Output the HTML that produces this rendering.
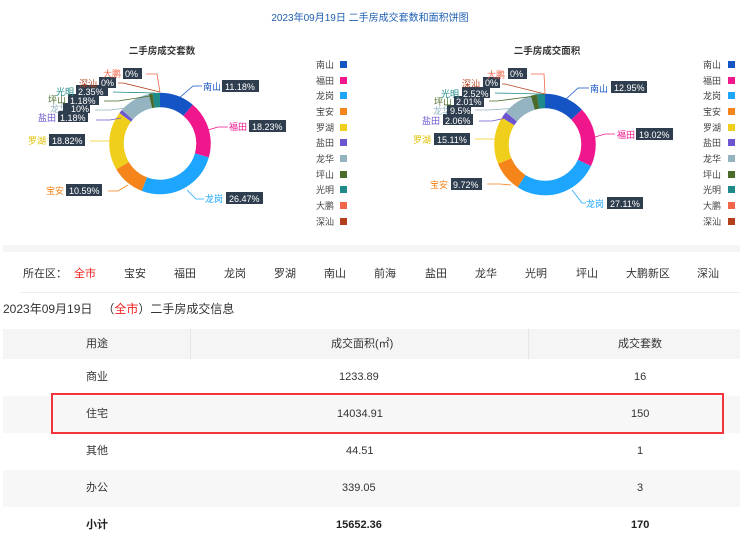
<!DOCTYPE html>
<html><head><meta charset="utf-8"><style>
body{margin:0;width:740px;height:549px;overflow:hidden;background:#fff;font-family:"Liberation Sans","Noto Sans CJK SC",sans-serif;color:#333;position:relative}
.a{position:absolute;white-space:nowrap}
.f{font-size:11px;color:#333;top:265px}
.row{position:absolute;left:3px;width:737px;height:37px;font-size:11px;color:#333}
.row span{position:absolute;top:0;line-height:37px}
</style></head><body>
<div class="a" style="left:0;width:740px;top:9px;text-align:center;font-size:10px;color:#1e5fb3">2023年09月19日 二手房成交套数和面积饼图</div>
<svg class="a" style="left:0;top:0" width="740" height="245" font-size="9" font-family="Liberation Sans,Noto Sans CJK SC,sans-serif">
<text x="162" y="54" text-anchor="middle" font-size="9.5" fill="#333" font-weight="bold">二手房成交套数</text>
<text x="547" y="54" text-anchor="middle" font-size="9.5" fill="#333" font-weight="bold">二手房成交面积</text>
<g id="c1" transform="translate(160,143.5) rotate(-90)" fill="none" stroke-width="14.5">
<circle r="43.5" pathLength="100" stroke="#1554c4" stroke-dasharray="11.18 100" stroke-dashoffset="0"/>
<circle r="43.5" pathLength="100" stroke="#f0178d" stroke-dasharray="18.23 100" stroke-dashoffset="-11.18"/>
<circle r="43.5" pathLength="100" stroke="#1ea6ff" stroke-dasharray="26.47 100" stroke-dashoffset="-29.41"/>
<circle r="43.5" pathLength="100" stroke="#f5841a" stroke-dasharray="10.59 100" stroke-dashoffset="-55.88"/>
<circle r="43.5" pathLength="100" stroke="#f0cf1c" stroke-dasharray="18.82 100" stroke-dashoffset="-66.47"/>
<circle r="43.5" pathLength="100" stroke="#6d55cf" stroke-dasharray="1.18 100" stroke-dashoffset="-85.29"/>
<circle r="43.5" pathLength="100" stroke="#94b4c1" stroke-dasharray="10 100" stroke-dashoffset="-86.47"/>
<circle r="43.5" pathLength="100" stroke="#4a6b2a" stroke-dasharray="1.18 100" stroke-dashoffset="-96.47"/>
<circle r="43.5" pathLength="100" stroke="#1f8a8a" stroke-dasharray="2.35 100" stroke-dashoffset="-97.65"/>
</g>
<g transform="translate(545,144.5) rotate(-90)" fill="none" stroke-width="14.5">
<circle r="43.5" pathLength="100" stroke="#1554c4" stroke-dasharray="12.95 100" stroke-dashoffset="0"/>
<circle r="43.5" pathLength="100" stroke="#f0178d" stroke-dasharray="19.02 100" stroke-dashoffset="-12.95"/>
<circle r="43.5" pathLength="100" stroke="#1ea6ff" stroke-dasharray="27.11 100" stroke-dashoffset="-31.97"/>
<circle r="43.5" pathLength="100" stroke="#f5841a" stroke-dasharray="9.72 100" stroke-dashoffset="-59.08"/>
<circle r="43.5" pathLength="100" stroke="#f0cf1c" stroke-dasharray="15.11 100" stroke-dashoffset="-68.8"/>
<circle r="43.5" pathLength="100" stroke="#6d55cf" stroke-dasharray="2.06 100" stroke-dashoffset="-83.91"/>
<circle r="43.5" pathLength="100" stroke="#94b4c1" stroke-dasharray="9.5 100" stroke-dashoffset="-85.97"/>
<circle r="43.5" pathLength="100" stroke="#4a6b2a" stroke-dasharray="2.01 100" stroke-dashoffset="-95.47"/>
<circle r="43.5" pathLength="100" stroke="#1f8a8a" stroke-dasharray="2.52 100" stroke-dashoffset="-97.48"/>
</g>
<g fill="none" stroke-width="0.8">
<path d="M178 99 L193 86 H202" stroke="#1554c4"/><path d="M208 130 L218 127 H228" stroke="#f0178d"/>
<path d="M187 190 L196 199 H204" stroke="#1ea6ff"/><path d="M128 185 L118 191 H108" stroke="#f5841a"/>
<path d="M110 141 H90" stroke="#f0cf1c"/><path d="M121 118 L110 120 H96" stroke="#6d55cf"/>
<path d="M135 107 L110 110 H95" stroke="#94b4c1"/><path d="M150 96 L118 101 H104" stroke="#4a6b2a"/>
<path d="M155 93 L113 92" stroke="#1f8a8a"/><path d="M160 92 L123 83 H118" stroke="#b3401b"/>
<path d="M160 92 L157 74 H146" stroke="#f06548"/>
<path d="M565 100 L578 88 H589" stroke="#1554c4"/><path d="M595 137 L605 134 H615" stroke="#f0178d"/>
<path d="M572 190 L582 203 H586" stroke="#1ea6ff"/><path d="M511 185 L500 184 H487" stroke="#f5841a"/>
<path d="M495 139 H475" stroke="#f0cf1c"/><path d="M506 118 L492 121 H479" stroke="#6d55cf"/>
<path d="M520 108 L488 110 H475" stroke="#94b4c1"/><path d="M535 96 L497 101 H489" stroke="#4a6b2a"/>
<path d="M541 94 L495 93" stroke="#1f8a8a"/><path d="M545 94 L505 84 H502" stroke="#b3401b"/>
<path d="M545 94 L544 74 H531" stroke="#f06548"/>
</g>
<g id="lbl">
<!-- chart1 -->
<text x="203" y="90" fill="#1554c4">南山</text><rect x="222" y="80" width="37" height="12" fill="#2f3e4e"/><text x="225" y="90" fill="#fff">11.18%</text>
<text x="229" y="130" fill="#f0178d">福田</text><rect x="249" y="120" width="37" height="12" fill="#2f3e4e"/><text x="252" y="130" fill="#fff">18.23%</text>
<text x="205" y="202" fill="#1ea6ff">龙岗</text><rect x="226" y="192" width="37" height="12" fill="#2f3e4e"/><text x="229" y="202" fill="#fff">26.47%</text>
<text x="46" y="194" fill="#f5841a">宝安</text><rect x="66" y="184" width="36" height="12" fill="#2f3e4e"/><text x="69" y="194" fill="#fff">10.59%</text>
<text x="28" y="144" fill="#e0c000">罗湖</text><rect x="49" y="134" width="36" height="12" fill="#2f3e4e"/><text x="52" y="144" fill="#fff">18.82%</text>
<text x="38" y="121" fill="#6d55cf">盐田</text><rect x="58" y="111" width="30" height="11" fill="#2f3e4e"/><text x="60" y="121" fill="#fff">1.18%</text>
<text x="50" y="112" fill="#94b4c1">龙华</text><rect x="63" y="103" width="27" height="10" fill="#2f3e4e"/><text x="71" y="112" fill="#fff">10%</text>
<text x="48" y="103" fill="#4a6b2a">坪山</text><rect x="68" y="94" width="31" height="11" fill="#2f3e4e"/><text x="70" y="104" fill="#fff">1.18%</text>
<text x="56" y="95" fill="#1f8a8a">光明</text><rect x="76" y="85" width="32" height="11" fill="#2f3e4e"/><text x="78" y="95" fill="#fff">2.35%</text>
<text x="79" y="87" fill="#b3401b">深汕</text><rect x="99" y="77" width="17" height="11" fill="#2f3e4e"/><text x="101" y="86" fill="#fff">0%</text>
<text x="103" y="77" fill="#f06548">大鹏</text><rect x="123" y="68" width="19" height="11" fill="#2f3e4e"/><text x="125" y="77" fill="#fff">0%</text>
<!-- chart2 -->
<text x="590" y="92" fill="#1554c4">南山</text><rect x="611" y="81" width="36" height="12" fill="#2f3e4e"/><text x="614" y="91" fill="#fff">12.95%</text>
<text x="617" y="138" fill="#f0178d">福田</text><rect x="636" y="128" width="37" height="12" fill="#2f3e4e"/><text x="639" y="138" fill="#fff">19.02%</text>
<text x="586" y="207" fill="#1ea6ff">龙岗</text><rect x="607" y="197" width="36" height="12" fill="#2f3e4e"/><text x="610" y="207" fill="#fff">27.11%</text>
<text x="430" y="188" fill="#f5841a">宝安</text><rect x="451" y="178" width="31" height="12" fill="#2f3e4e"/><text x="453" y="188" fill="#fff">9.72%</text>
<text x="413" y="143" fill="#e0c000">罗湖</text><rect x="434" y="133" width="36" height="12" fill="#2f3e4e"/><text x="437" y="143" fill="#fff">15.11%</text>
<text x="422" y="124" fill="#6d55cf">盐田</text><rect x="443" y="114" width="30" height="11" fill="#2f3e4e"/><text x="445" y="124" fill="#fff">2.06%</text>
<text x="433" y="114" fill="#94b4c1">龙华</text><rect x="447" y="105" width="24" height="10" fill="#2f3e4e"/><text x="450" y="114" fill="#fff">9.5%</text>
<text x="434" y="105" fill="#4a6b2a">坪山</text><rect x="454" y="96" width="30" height="11" fill="#2f3e4e"/><text x="456" y="105" fill="#fff">2.01%</text>
<text x="441" y="97" fill="#1f8a8a">光明</text><rect x="462" y="87" width="28" height="11" fill="#2f3e4e"/><text x="463" y="97" fill="#fff">2.52%</text>
<text x="462" y="87" fill="#b3401b">深汕</text><rect x="483" y="77" width="17" height="11" fill="#2f3e4e"/><text x="485" y="86" fill="#fff">0%</text>
<text x="487" y="78" fill="#f06548">大鹏</text><rect x="508" y="68" width="19" height="11" fill="#2f3e4e"/><text x="510" y="77" fill="#fff">0%</text>
</g>
<g fill="#444" font-size="9">
<text x="316" y="68">南山</text><text x="316" y="84">福田</text><text x="316" y="99">龙岗</text><text x="316" y="115">宝安</text><text x="316" y="131">罗湖</text><text x="316" y="146">盐田</text><text x="316" y="162">龙华</text><text x="316" y="178">坪山</text><text x="316" y="193">光明</text><text x="316" y="209">大鹏</text><text x="316" y="225">深汕</text>
<text x="703" y="68">南山</text><text x="703" y="84">福田</text><text x="703" y="99">龙岗</text><text x="703" y="115">宝安</text><text x="703" y="131">罗湖</text><text x="703" y="146">盐田</text><text x="703" y="162">龙华</text><text x="703" y="178">坪山</text><text x="703" y="193">光明</text><text x="703" y="209">大鹏</text><text x="703" y="225">深汕</text>
</g>
<g>
<rect x="340" y="61" width="7" height="7" fill="#1554c4"/><rect x="340" y="77" width="7" height="7" fill="#f0178d"/><rect x="340" y="92" width="7" height="7" fill="#1ea6ff"/><rect x="340" y="108" width="7" height="7" fill="#f5841a"/><rect x="340" y="124" width="7" height="7" fill="#f0cf1c"/><rect x="340" y="139" width="7" height="7" fill="#6d55cf"/><rect x="340" y="155" width="7" height="7" fill="#94b4c1"/><rect x="340" y="171" width="7" height="7" fill="#4a6b2a"/><rect x="340" y="186" width="7" height="7" fill="#1f8a8a"/><rect x="340" y="202" width="7" height="7" fill="#f06548"/><rect x="340" y="218" width="7" height="7" fill="#b3401b"/>
<rect x="728" y="61" width="7" height="7" fill="#1554c4"/><rect x="728" y="77" width="7" height="7" fill="#f0178d"/><rect x="728" y="92" width="7" height="7" fill="#1ea6ff"/><rect x="728" y="108" width="7" height="7" fill="#f5841a"/><rect x="728" y="124" width="7" height="7" fill="#f0cf1c"/><rect x="728" y="139" width="7" height="7" fill="#6d55cf"/><rect x="728" y="155" width="7" height="7" fill="#94b4c1"/><rect x="728" y="171" width="7" height="7" fill="#4a6b2a"/><rect x="728" y="186" width="7" height="7" fill="#1f8a8a"/><rect x="728" y="202" width="7" height="7" fill="#f06548"/><rect x="728" y="218" width="7" height="7" fill="#b3401b"/>
</g>
</svg>
<div class="a" style="left:3px;top:245px;width:737px;height:7px;background:#f5f5f5"></div>
<div class="a f" style="left:23px">所在区：</div>
<div class="a f" style="left:74px;color:#f02020">全市</div>
<div class="a f" style="left:124px">宝安</div><div class="a f" style="left:174px">福田</div><div class="a f" style="left:224px">龙岗</div><div class="a f" style="left:274px">罗湖</div><div class="a f" style="left:324px">南山</div><div class="a f" style="left:374px">前海</div><div class="a f" style="left:425px">盐田</div><div class="a f" style="left:475px">龙华</div><div class="a f" style="left:525px">光明</div><div class="a f" style="left:576px">坪山</div><div class="a f" style="left:626px">大鹏新区</div><div class="a f" style="left:697px">深汕</div>
<div class="a" style="left:20px;top:292px;width:720px;height:1px;background:#eee"></div>
<div class="a" style="left:3px;top:300px;font-size:12px;color:#333">2023年09月19日 &nbsp;&nbsp;（<span style="color:#f02020">全市</span>）二手房成交信息</div>
<div class="row" style="top:329px;height:30px;background:#f5f5f5"><span style="left:83px;line-height:30px">用途</span><span style="left:328px;line-height:30px">成交面积(㎡)</span><span style="left:615px;line-height:30px">成交套数</span>
<i style="position:absolute;left:187px;top:0;width:1px;height:30px;background:#e6e6e6"></i><i style="position:absolute;left:525px;top:0;width:1px;height:30px;background:#e6e6e6"></i></div>
<div class="row" style="top:359px"><span style="left:83px">商业</span><span style="left:336px">1233.89</span><span style="left:631px">16</span></div>
<div class="row" style="top:396px;background:#f7f7f7"><span style="left:83px">住宅</span><span style="left:334px">14034.91</span><span style="left:628px">150</span></div>
<div class="row" style="top:433px"><span style="left:83px">其他</span><span style="left:343px">44.51</span><span style="left:634px">1</span></div>
<div class="row" style="top:470px;background:#f7f7f7"><span style="left:83px">办公</span><span style="left:339px">339.05</span><span style="left:634px">3</span></div>
<div class="row" style="top:507px;font-weight:bold;color:#222"><span style="left:83px">小计</span><span style="left:333px">15652.36</span><span style="left:628px">170</span></div>
<div class="a" style="left:51px;top:393px;width:669px;height:37px;border:2px solid #f0353d"></div>
</body></html>
